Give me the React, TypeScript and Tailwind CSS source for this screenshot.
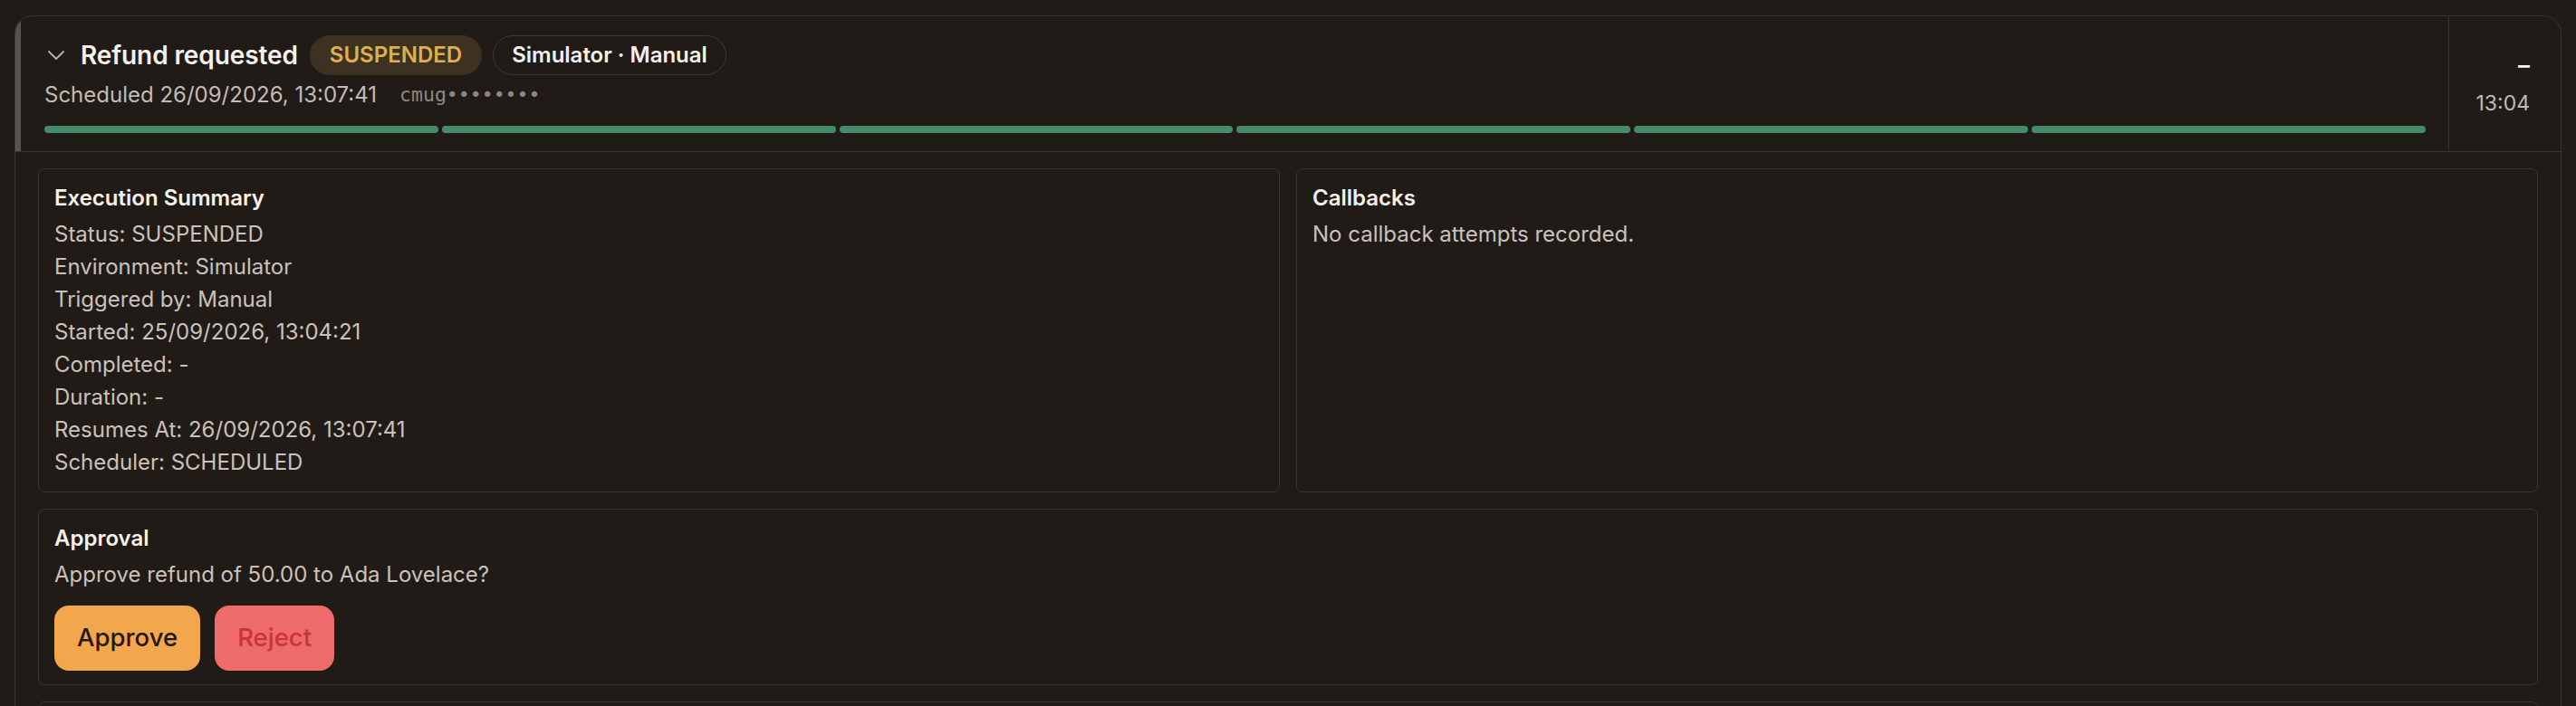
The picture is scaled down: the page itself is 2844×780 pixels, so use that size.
import React from "react";

const summary = [
  "Status: SUSPENDED",
  "Environment: Simulator",
  "Triggered by: Manual",
  "Started: 25/09/2026, 13:04:21",
  "Completed: -",
  "Duration: -",
  "Resumes At: 26/09/2026, 13:07:41",
  "Scheduler: SCHEDULED",
];

function Card({ title, children, className = "" }: { title: string; children?: React.ReactNode; className?: string }) {
  return (
    <div className={`rounded-[7px] border border-[#3a3430] px-[17px] pt-[14px] pb-[14px] ${className}`}>
      <div className="text-[24px] leading-[36px] font-semibold text-[#f4f0eb]">{title}</div>
      <div className="mt-[4px] text-[24px] leading-[36px] text-[#c9c2bb]">{children}</div>
    </div>
  );
}

export default function App() {
  return (
    <div
      className="h-[780px] overflow-hidden bg-[#211b18] px-[16px] pt-[17px]"
      style={{ fontFamily: "Inter, 'Noto Sans', sans-serif" }}
    >
      <div className="rounded-[20px] border border-[#3a3430] overflow-hidden">
        {/* Header */}
        <div className="flex border-b border-[#3a3430]">
          <div className="flex-1 border-l-[6px] border-l-[#57524d] pl-[26px] pr-[25px] pt-[21px] pb-[20px]">
            <div className="flex items-center h-[44px]">
              <svg width="20" height="12" viewBox="0 0 20 12" className="ml-[3px] mr-[17px]" fill="none">
                <polyline points="2,2 10,10 18,2" stroke="#b8b1aa" strokeWidth="1.8" strokeLinecap="round" strokeLinejoin="round" />
              </svg>
              <span className="text-[28px] font-semibold text-[#f4f0eb] tracking-[-0.1px]">Refund requested</span>
              <span className="ml-[13px] h-[44px] flex items-center rounded-full bg-[#3d3122] px-[22px] text-[24px] font-semibold text-[#e2ad4d]">
                SUSPENDED
              </span>
              <span className="ml-[12px] h-[44px] flex items-center rounded-full border border-[#3d3833] px-[20px] text-[24px] font-semibold text-[#f4f0eb]">
                Simulator · Manual
              </span>
            </div>
            <div className="mt-[4px] flex items-center h-[36px]">
              <span className="text-[24px] text-[#c2bbb4]">Scheduled 26/09/2026, 13:07:41</span>
              <span
                className="ml-[25px] text-[21.5px] text-[#8d8781]"
                style={{ fontFamily: "'DejaVu Sans Mono', 'Liberation Mono', monospace" }}
              >
                cmug••••••••
              </span>
            </div>
            <div className="mt-[16px] flex gap-[4px]">
              {[0, 1, 2, 3, 4, 5].map((i) => (
                <div key={i} className="h-[8px] flex-1 rounded-full bg-[#458b67]" />
              ))}
            </div>
          </div>
          <div className="w-[124px] border-l border-[#3a3430] flex flex-col items-end justify-center gap-[6px] pr-[34px]">
            <span className="text-[26px] leading-[36px] font-semibold text-[#f4f0eb]">–</span>
            <span className="text-[23px] leading-[36px] text-[#c2bbb4]">13:04</span>
          </div>
        </div>

        {/* Body */}
        <div className="px-[25px] pt-[18px] pb-[18px] flex flex-col gap-[18px]">
          <div className="grid grid-cols-2 gap-[18px]">
            <Card title="Execution Summary">
              {summary.map((s) => (
                <div key={s}>{s}</div>
              ))}
            </Card>
            <Card title="Callbacks">
              <div>No callback attempts recorded.</div>
            </Card>
          </div>
          <div className="rounded-[7px] border border-[#3a3430] px-[17px] pt-[14px] pb-[15px]">
            <div className="text-[24px] leading-[36px] font-semibold text-[#f4f0eb]">Approval</div>
            <div className="mt-[4px] text-[24px] leading-[36px] text-[#c9c2bb]">Approve refund of 50.00 to Ada Lovelace?</div>
            <div className="mt-[16px] flex gap-[16px]">
              <button className="h-[72px] px-[25px] rounded-[16px] bg-[#f2a74c] text-[27.5px] font-medium text-[#24170c]">
                Approve
              </button>
              <button className="h-[72px] px-[25px] rounded-[16px] bg-[#ee6b6b] text-[27.5px] font-medium text-[#c93434]">
                Reject
              </button>
            </div>
          </div>
          <div className="h-[120px] rounded-[7px] border border-[#3a3430]" />
        </div>
      </div>
    </div>
  );
}
